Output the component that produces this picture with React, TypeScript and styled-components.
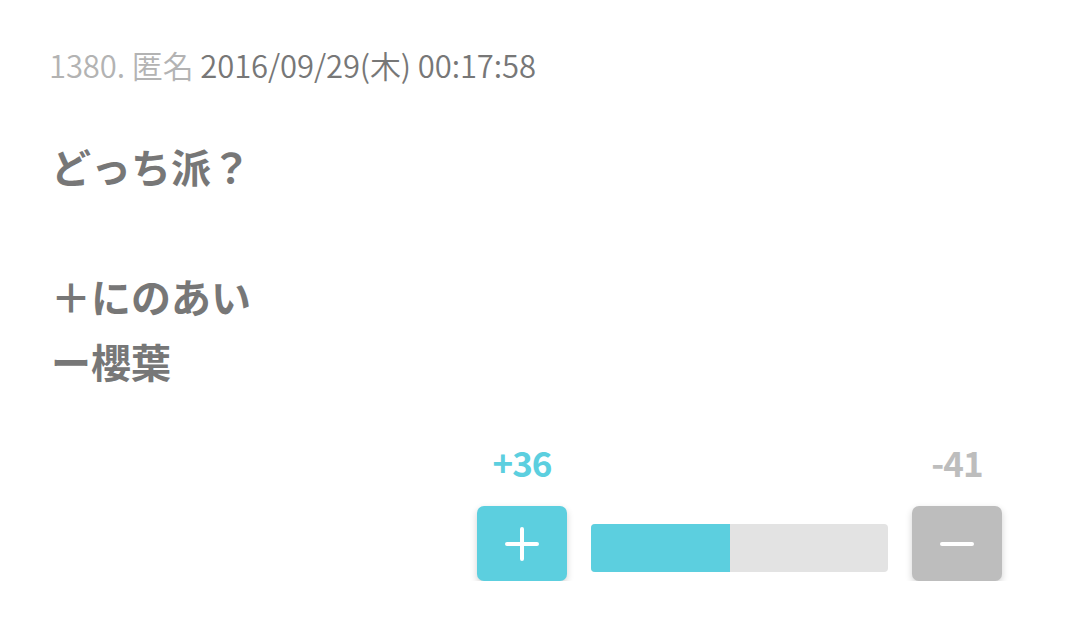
import styled, { createGlobalStyle } from 'styled-components';

const GlobalStyle = createGlobalStyle`
    body {
        margin: 0;
        background: #ffffff;
        font-family: "Noto Sans CJK JP", "Noto Sans", sans-serif;
    }
`;

const Page = styled.div`
    padding: 42px 78px 0 49px;
`;
const Meta = styled.div`
    font-size: 31px;
    font-weight: 350;
    line-height: 46px;
    color: #777777;
    letter-spacing: -0.1px;
`;
const Faded = styled.span`
    color: #b3b3b3;
`;
const Body = styled.div`
    margin-top: 46px;
    padding-left: 2px;
    font-size: 40px;
    font-weight: 700;
    line-height: 65px;
    color: #777777;
    white-space: pre-line;
`;
const Vote = styled.div`
    display: flex;
    justify-content: flex-end;
    margin-top: 50px;
`;
const Widget = styled.div`
    display: grid;
    grid-template-columns: 90px 297px 90px;
    column-gap: 24px;
    row-gap: 26px;
    align-items: start;
`;
const Count = styled.div<{ $plus?: boolean }>`
    grid-row: 1;
    grid-column: ${(p) => (p.$plus ? 1 : 3)};
    text-align: center;
    font-size: 35px;
    font-weight: 700;
    line-height: 36px;
    letter-spacing: -1px;
    color: ${(p) => (p.$plus ? '#5ccfdf' : '#bdbdbd')};
`;
const Button = styled.button<{ $plus?: boolean }>`
    grid-row: 2;
    width: 90px;
    height: 75px;
    border: 0;
    border-radius: 7px;
    display: flex;
    align-items: center;
    justify-content: center;
    padding: 0;
    background: ${(p) => (p.$plus ? '#5ccfdf' : '#bdbdbd')};
    box-shadow: 0 3px 7px rgba(0, 0, 0, 0.18);
    cursor: pointer;
`;
const Bar = styled.div`
    grid-row: 2;
    grid-column: 2;
    margin-top: 18px;
    height: 48px;
    border-radius: 4px;
    background: #e3e3e3;
    overflow: hidden;
`;
const Fill = styled.div`
    height: 100%;
    background: #5ccfdf;
`;

function PlusIcon() {
    return (
        <svg width="34" height="34" viewBox="0 0 34 34">
            <path d="M17 2v30M2 17h30" stroke="#fff" strokeWidth="4" strokeLinecap="round" />
        </svg>
    );
}
function MinusIcon() {
    return (
        <svg width="34" height="34" viewBox="0 0 34 34">
            <path d="M2 17h30" stroke="#fff" strokeWidth="4" strokeLinecap="round" />
        </svg>
    );
}

export default function App() {
    const plus = 36;
    const minus = 41;
    const ratio = (plus / (plus + minus)) * 100;

    return (
        <Page>
            <GlobalStyle />
            <Meta>
                <Faded>1380. 匿名</Faded> 2016/09/29(木) 00:17:58
            </Meta>
            <Body>{'どっち派？\n\n＋にのあい\nー櫻葉'}</Body>
            <Vote>
                <Widget>
                    <Count $plus>+{plus}</Count>
                    <Count>-{minus}</Count>
                    <Button $plus>
                        <PlusIcon />
                    </Button>
                    <Bar>
                        <Fill style={{ width: `${ratio}%` }} />
                    </Bar>
                    <Button>
                        <MinusIcon />
                    </Button>
                </Widget>
            </Vote>
        </Page>
    );
}
